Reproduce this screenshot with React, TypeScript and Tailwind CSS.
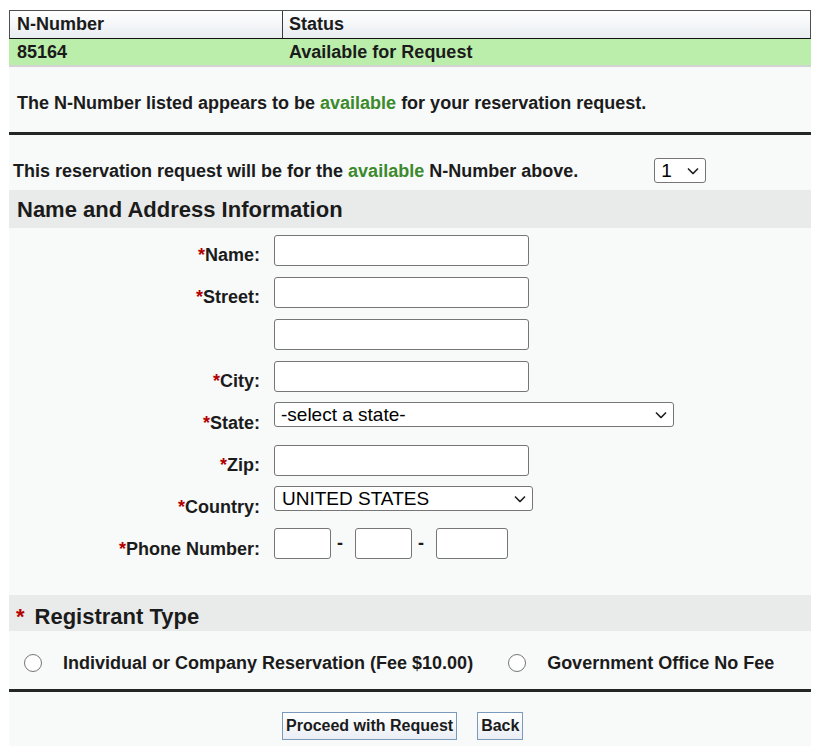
import type { ReactNode } from "react";

function Star() {
  return <span className="text-[#b30000]">*</span>;
}

function Chevron() {
  return (
    <svg
      className="pointer-events-none absolute right-[7px] top-1/2 -translate-y-1/2 w-[12px] h-[7px]"
      viewBox="0 0 12 7"
      fill="none"
    >
      <path d="M1 1l5 5 5-5" stroke="#222" strokeWidth="1.6" />
    </svg>
  );
}

function Select({ width, value, padLeft = "pl-[6px]" }: { width: string; value: string; padLeft?: string }) {
  return (
    <div className={`relative ${width}`}>
      <select
        defaultValue={value}
        className={`appearance-none w-full h-[25px] ${padLeft} pr-[24px] border border-[#767676] rounded-[3px] bg-white text-[19px] leading-[23px] font-normal text-black outline-none`}
      >
        <option>{value}</option>
      </select>
      <Chevron />
    </div>
  );
}

function TextBox({ width = "w-[255px]" }: { width?: string }) {
  return <input type="text" className={`${width} h-[31px] border border-[#767676] rounded-[3px] bg-white outline-none`} />;
}

function Row({ label, select = false, children }: { label?: string; select?: boolean; children: ReactNode }) {
  return (
    <div className="flex h-[42px]">
      <div className="w-[251px] text-right pt-[14px] leading-[22px] text-[18px] font-bold">
        {label && (
          <>
            <Star />
            {label}:
          </>
        )}
      </div>
      <div className={`ml-[14px] ${select ? "pt-[4px]" : "pt-[5px]"}`}>{children}</div>
    </div>
  );
}

function Radio({ label }: { label: string }) {
  return (
    <label className="flex items-center">
      <span className="w-[18px] h-[18px] rounded-full border border-[#767676] bg-white" />
      <span className="ml-[21px] text-[18px] font-bold">{label}</span>
    </label>
  );
}

export default function App() {
  return (
    <div className="min-h-screen bg-white pt-[10px] pl-[9px] font-['Liberation_Sans',Arial,sans-serif] text-[#1b1b1b]">
      <div className="w-[802px] bg-[#f8f9f9]">
        {/* result table */}
        <div className="flex h-[29px] border border-[#4f4f4f] border-b-[#111] bg-linear-to-b from-white to-[#e9edf1] text-[18px] font-bold leading-[27px]">
          <div className="w-[273px] border-r border-[#3a3a3a] pl-[7px]">N-Number</div>
          <div className="pl-[6px]">Status</div>
        </div>
        <div className="flex h-[28px] bg-[#bbeeab] border-b-2 border-[#d2d4d2] text-[18px] font-bold leading-[26px]">
          <div className="w-[274px] pl-[8px]">85164</div>
          <div className="pl-[6px]">Available for Request</div>
        </div>

        <div className="h-[65px] pt-[25px] pl-[8px] text-[18px] font-bold leading-[22px]">
          The N-Number listed appears to be <span className="text-[#3b8a2b]">available</span> for your reservation
          request.
        </div>
        <div className="h-[3px] bg-[#252525]" />

        <div className="flex items-center h-[55px] pt-[23px] pb-[6px] pl-[4px] text-[18px] font-bold">
          <span>
            This reservation request will be for the <span className="text-[#3b8a2b]">available</span> N-Number
            above.
          </span>
          <div className="ml-[76px]">
            <Select width="w-[52px]" value="1" />
          </div>
        </div>

        <div className="flex items-center h-[38px] pl-[8px] bg-[#e9eaea] text-[22px] font-bold">
          Name and Address Information
        </div>

        <div className="pt-[2px] pb-[29px]">
          <Row label="Name">
            <TextBox />
          </Row>
          <Row label="Street">
            <TextBox />
          </Row>
          <Row>
            <TextBox />
          </Row>
          <Row label="City">
            <TextBox />
          </Row>
          <Row label="State" select>
            <Select width="w-[400px]" value="-select a state-" />
          </Row>
          <Row label="Zip">
            <TextBox />
          </Row>
          <Row label="Country" select>
            <Select width="w-[259px]" value="UNITED STATES" padLeft="pl-[7px]" />
          </Row>
          <Row label="Phone Number" select>
            <div className="flex items-center text-[18px] font-bold">
              <TextBox width="w-[57px]" />
              <span className="ml-[6px] mr-[12px]">-</span>
              <TextBox width="w-[57px]" />
              <span className="ml-[6px] mr-[12px]">-</span>
              <TextBox width="w-[72px]" />
            </div>
          </Row>
        </div>

        <div className="flex items-center h-[36px] pt-[6px] pl-[7px] bg-[#e9eaea] text-[22px] font-bold">
          <span className="text-[#b30000] mr-[10px]">*</span>
          Registrant Type
        </div>

        <div className="flex h-[58px] pt-[21px] pl-[15px]">
          <div className="flex items-center h-[22px]">
            <Radio label="Individual or Company Reservation (Fee $10.00)" />
            <div className="ml-[35px]">
              <Radio label="Government Office No Fee" />
            </div>
          </div>
        </div>
        <div className="h-[3px] bg-[#252525]" />

        <div className="flex gap-[20px] pt-[20px] pb-[20px] pl-[273px]">
          <button className="h-[28px] px-[3px] border border-[#7b99bb] bg-linear-to-b from-white to-[#eaeef4] text-[16px] font-bold leading-[26px]">
            Proceed with Request
          </button>
          <button className="h-[28px] px-[3px] border border-[#7b99bb] bg-linear-to-b from-white to-[#eaeef4] text-[16px] font-bold leading-[26px]">
            Back
          </button>
        </div>
      </div>
    </div>
  );
}
